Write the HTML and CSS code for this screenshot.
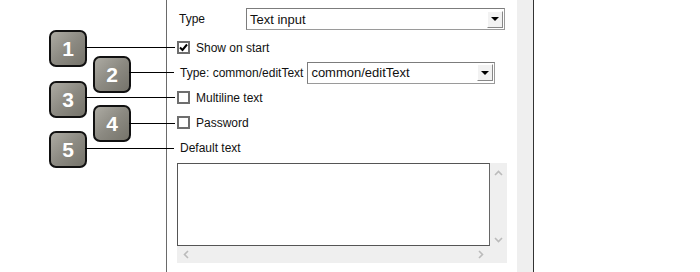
FILE: index.html
```html
<!DOCTYPE html>
<html>
<head>
    <title>Text input properties</title>
    <link rel="stylesheet" href="styles.css">
</head>
<body>
    <div class="stage">
        <div class="panel">
            <div class="form">
                <div class="row row-type">
                    <span class="label">Type</span>
                    <div class="select select-type">
                        <span class="value">Text input</span>
                        <span class="drop"><i class="arrow"></i></span>
                    </div>
                </div>
                <div class="row">
                    <span class="check checked">
                        <svg width="9" height="9" viewBox="0 0 9 9"><path d="M1 4.5 L3.5 7 L8 1.5" fill="none" stroke="#000" stroke-width="2"/></svg>
                    </span>
                    <span class="text">Show on start</span>
                </div>
                <div class="row">
                    <span class="text plain">Type: common/editText</span>
                    <div class="select select-class">
                        <span class="value">common/editText</span>
                        <span class="drop"><i class="arrow"></i></span>
                    </div>
                </div>
                <div class="row">
                    <span class="check"></span>
                    <span class="text">Multiline text</span>
                </div>
                <div class="row">
                    <span class="check"></span>
                    <span class="text">Password</span>
                </div>
                <div class="row">
                    <span class="text plain">Default text</span>
                </div>
                <div class="scroller">
                    <div class="textarea"></div>
                    <div class="vbar">
                        <svg width="9" height="6" viewBox="0 0 9 6"><path d="M1 5 L4.5 1.5 L8 5" fill="none" stroke="#bbb" stroke-width="1.6"/></svg>
                        <svg width="9" height="6" viewBox="0 0 9 6"><path d="M1 1 L4.5 4.5 L8 1" fill="none" stroke="#bbb" stroke-width="1.6"/></svg>
                    </div>
                    <div class="hbar">
                        <svg width="6" height="9" viewBox="0 0 6 9"><path d="M5 1 L1.5 4.5 L5 8" fill="none" stroke="#bbb" stroke-width="1.6"/></svg>
                        <svg width="6" height="9" viewBox="0 0 6 9"><path d="M1 1 L4.5 4.5 L1 8" fill="none" stroke="#bbb" stroke-width="1.6"/></svg>
                    </div>
                    <div class="corner"></div>
                </div>
            </div>
            <div class="strip"></div>
        </div>

        <!-- numbered callouts -->
        <div class="badge b1">1</div>
        <div class="badge b2">2</div>
        <div class="badge b3">3</div>
        <div class="badge b4">4</div>
        <div class="badge b5">5</div>
    </div>
</body>
</html>
```

FILE: styles.css
```css
body {
    margin: 0;
    background: #fff;
    font-family: "Liberation Sans", Arial, sans-serif;
    font-size: 12px;
    color: #111;
}
.stage {
    position: relative;
    width: 700px;
    height: 272px;
    overflow: hidden;
}
.panel {
    margin-left: 166px;
    width: 366px;
    height: 272px;
    display: flex;
    border-left: 1px solid #6a6a6a;
    border-right: 1px solid #333;
}
.form {
    width: 350px;
    padding-left: 10px;
    box-sizing: border-box;
}
.strip {
    width: 16px;
    background: #efefef;
}
.row {
    height: 25px;
    display: flex;
    align-items: center;
}
.row-type {
    margin-top: 8px;
    margin-bottom: 5px;
    height: 22px;
}
.label {
    width: 69px;
    padding-left: 2px;
    box-sizing: border-box;
}
.select {
    height: 22px;
    box-sizing: border-box;
    border: 1px solid #7c7c7c;
    border-right-color: #9a9a9a;
    border-bottom-color: #9a9a9a;
    background: #fff;
    display: flex;
    align-items: center;
    justify-content: space-between;
    padding: 0 1px 0 3px;
    font-size: 13px;
}
.select-type {
    width: 259px;
}
.select-class {
    width: 188px;
    margin-left: 4px;
}
.drop {
    width: 16px;
    height: 17px;
    box-sizing: border-box;
    background: #f2f2f2;
    border: 1px solid #fff;
    border-right-color: #888;
    border-bottom-color: #888;
    display: flex;
    align-items: center;
    justify-content: center;
}
.arrow {
    width: 0;
    height: 0;
    border-left: 4px solid transparent;
    border-right: 4px solid transparent;
    border-top: 4px solid #000;
}
.check {
    width: 13px;
    height: 13px;
    box-sizing: border-box;
    border: 2px solid #6e6e6e;
    background: #fff;
    display: flex;
    align-items: center;
    justify-content: center;
}
.text {
    margin-left: 6px;
}
.text.plain {
    margin-left: 3px;
}
.scroller {
    margin-top: 3px;
    width: 330px;
    height: 100px;
    display: grid;
    grid-template-columns: 313px 17px;
    grid-template-rows: 83px 17px;
    background: #efefef;
}
.textarea {
    background: #fff;
    border: 1px solid #555;
    border-right-color: #666;
}
.vbar {
    display: flex;
    flex-direction: column;
    justify-content: space-between;
    align-items: center;
    padding: 7px 0 3px;
}
.hbar {
    display: flex;
    justify-content: space-between;
    align-items: center;
    padding: 0 6px 0 6px;
}

/* callouts */
.badge {
    position: absolute;
    width: 38px;
    height: 37px;
    box-sizing: border-box;
    border: 2px solid #111;
    border-radius: 7px;
    background: linear-gradient(135deg, #adaba3 0%, #8c8a82 50%, #75736a 100%);
    color: #fff;
    font-weight: bold;
    font-size: 21px;
    display: flex;
    align-items: center;
    justify-content: center;
}
.badge::after {
    content: "";
    position: absolute;
    left: 100%;
    height: 1px;
    background: #000;
}
.b1 { left: 49px; top: 30px; }
.b1::after { width: 90px; top: 15px; }
.b2 { left: 93px; top: 56px; }
.b2::after { width: 45px; top: 14px; }
.b3 { left: 49px; top: 81px; }
.b3::after { width: 90px; top: 14px; }
.b4 { left: 93px; top: 105px; }
.b4::after { width: 46px; top: 16px; }
.b5 { left: 49px; top: 131px; }
.b5::after { width: 89px; top: 15px; }
```
